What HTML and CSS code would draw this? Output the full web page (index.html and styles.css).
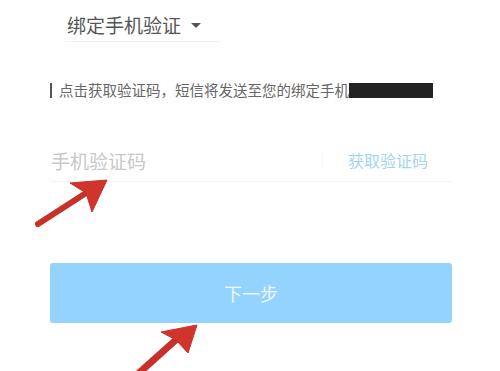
FILE: index.html
```html
<!DOCTYPE html>
<html lang="zh">
<head>
<meta charset="utf-8">
<link rel="stylesheet" href="styles.css">
</head>
<body>
<div class="page">
  <div class="title-row">
    <div class="title">绑定手机验证<span class="caret"></span></div>
  </div>
  <div class="info">
    <span class="bar"></span>
    <span class="info-text">点击获取验证码，短信将发送至您的绑定手机</span>
    <span class="mask"></span>
  </div>
  <div class="field">
    <span class="placeholder">手机验证码</span>
    <span class="sep"></span>
    <span class="get-code">获取验证码</span>
  </div>
  <div class="btn">下一步</div>
</div>
<svg class="arrows" width="500" height="371" viewBox="0 0 500 371">
  <g fill="#d0352b" stroke="#c8302a">
    <line x1="38" y1="224" x2="86" y2="193" stroke-width="6" stroke-linecap="round"/>
    <polygon points="107,180 70,183 86,193 92,212" stroke-width="1" stroke-linejoin="round"/>
    <line x1="120" y1="390" x2="178" y2="338" stroke-width="7"/>
    <polygon points="197,325 161,332 176,340 188,353" stroke-width="1" stroke-linejoin="round"/>
  </g>
</svg>
</body>
</html>
```
FILE: styles.css
```css
html, body {
  margin: 0;
  padding: 0;
  background: #ffffff;
}
body {
  width: 500px;
  height: 371px;
  overflow: hidden;
  position: relative;
  font-family: "Noto Sans CJK SC", "Noto Sans", sans-serif;
}
.page {
  padding: 0 48px 0 50px;
  display: flex;
  flex-direction: column;
}
.title-row {
  display: flex;
  padding-left: 16px;
  padding-top: 10px;
}
.title {
  width: 154px;
  font-size: 19px;
  line-height: 30px;
  color: #555555;
  border-bottom: 1px solid #f0f0f0;
  padding-bottom: 1px;
  display: flex;
  align-items: center;
  padding-left: 1px;
}
.caret {
  width: 0;
  height: 0;
  border-left: 5px solid transparent;
  border-right: 5px solid transparent;
  border-top: 5px solid #555555;
  margin-left: 10px;
  margin-top: 1px;
}
.info {
  margin-top: 40px;
  display: flex;
  align-items: center;
  height: 16px;
}
.bar {
  width: 2px;
  height: 15px;
  background: #555555;
  margin-right: 7px;
}
.info-text {
  font-size: 14.5px;
  color: #666666;
  line-height: 16px;
}
.mask {
  width: 84px;
  height: 15px;
  background: #222222;
}
.field {
  margin-top: 41px;
  height: 42px;
  border-bottom: 1px solid #f3f3f3;
  display: flex;
  align-items: center;
}
.placeholder {
  font-size: 19px;
  color: #c8c8c8;
  flex: 1;
  padding-left: 1px;
}
.sep {
  width: 1px;
  height: 14px;
  background: #f6f6f6;
  margin-right: 25px;
}
.get-code {
  font-size: 16px;
  color: #a4d5f0;
  margin-right: 24px;
}
.btn {
  margin-top: 81px;
  height: 60px;
  border-radius: 3px;
  background: #94d3fd;
  color: #eef8ff;
  font-size: 18px;
  display: flex;
  align-items: center;
  justify-content: center;
}
.arrows {
  position: absolute;
  left: 0;
  top: 0;
  pointer-events: none;
}
```
